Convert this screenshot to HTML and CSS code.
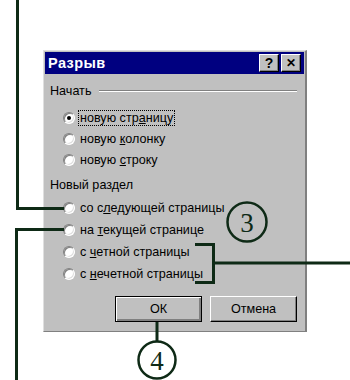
FILE: index.html
```html
<!DOCTYPE html>
<html lang="ru">
<head>
    <meta charset="UTF-8">
    <title>Разрыв</title>
    <link rel="stylesheet" href="styles.css">
</head>
<body>
    <div class="page">
        <div class="dialog">
            <div class="titlebar">
                <span class="title">Разрыв</span>
                <div class="title-buttons">
                    <div class="tbtn">?</div>
                    <div class="tbtn tbtn-close">&#x2715;</div>
                </div>
            </div>
            <div class="dialog-body">
                <div class="group-head">
                    <span>Начать</span>
                    <div class="group-line"></div>
                </div>
                <ul class="options">
                    <li><span class="radio checked"></span><span class="label focus">новую стр<u>а</u>ницу</span></li>
                    <li><span class="radio"></span><span class="label">новую <u>к</u>олонку</span></li>
                    <li><span class="radio"></span><span class="label">новую <u>с</u>троку</span></li>
                </ul>
                <div class="section-head">Новый раздел</div>
                <ul class="options options-wide">
                    <li><span class="radio"></span><span class="label">со с<u>л</u>едующей страницы</span></li>
                    <li><span class="radio"></span><span class="label">на <u>т</u>екущей странице</span></li>
                    <li><span class="radio"></span><span class="label">с <u>ч</u>етной страницы</span></li>
                    <li><span class="radio"></span><span class="label">с <u>н</u>ечетной страницы</span></li>
                </ul>
                <div class="buttons">
                    <div class="btn btn-default"><span>ОК</span></div>
                    <div class="btn"><span>Отмена</span></div>
                </div>
            </div>
        </div>

        <!-- callout lines drawn over the dialog -->
        <svg class="callouts" width="350" height="380" viewBox="0 0 350 380">
            <g fill="none" stroke="#0e2a16" stroke-width="3">
                <path d="M17.5 0 V208.5 H64"/>
                <path d="M16.5 380 V229.5 H64"/>
                <path d="M195 244.5 H213.5 V282.5 H195"/>
                <path d="M213.5 263 H350"/>
                <path d="M157 322 V342"/>
                <circle cx="247" cy="222" r="19.5" stroke-width="2.5"/>
                <circle cx="157" cy="360" r="18.5" stroke-width="2.5"/>
            </g>
            <g fill="#0e2a16" font-family="'Liberation Serif', serif" font-size="27" text-anchor="middle">
                <text x="247" y="231.5">3</text>
                <text x="157" y="369.5">4</text>
            </g>
        </svg>
    </div>
</body>
</html>
```

FILE: styles.css
```css
body {
    margin: 0;
    padding: 0;
    background-color: #ffffff;
    font-family: 'Liberation Sans', Arial, sans-serif;
    font-size: 12.6px;
    color: #000000;
}

.page {
    position: relative;
    width: 350px;
    height: 380px;
    overflow: hidden;
}

.dialog {
    margin: 50px 0 0 43px;
    width: 261px;
    background-color: #c0c0c0;
    border-top: 1px solid #dfdfdf;
    border-left: 1px solid #dfdfdf;
    border-right: 2px solid #808080;
    border-bottom: 1px solid #808080;
}

.titlebar {
    height: 22px;
    margin: 1px;
    background-color: #000080;
    display: flex;
    align-items: center;
    justify-content: space-between;
    padding: 0 3px 0 3px;
}

.title {
    color: #ffffff;
    font-weight: bold;
    font-size: 14.5px;
    letter-spacing: 0.4px;
}

.title-buttons {
    display: flex;
    gap: 2px;
}

.tbtn {
    width: 18px;
    height: 16px;
    background-color: #c0c0c0;
    border-top: 1px solid #ffffff;
    border-left: 1px solid #ffffff;
    border-right: 1px solid #000000;
    border-bottom: 1px solid #000000;
    box-shadow: inset -1px -1px 0 #808080;
    font-weight: bold;
    font-size: 14px;
    line-height: 16px;
    text-align: center;
}

.tbtn-close {
    font-size: 12px;
}

.dialog-body {
    padding: 7px 8px 9px 6px;
}

.group-head {
    display: flex;
    align-items: center;
    gap: 8px;
    height: 18px;
}

.group-line {
    flex: 1;
    height: 0;
    border-top: 1px solid #808080;
    border-bottom: 1px solid #ffffff;
}

.options {
    list-style: none;
    margin: 0;
    padding: 0 0 0 13px;
}

.options li {
    display: flex;
    align-items: center;
    height: 21px;
}

.options-wide li {
    height: 22px;
}

.group-head + .options {
    margin-top: 7px;
}

.radio {
    width: 12px;
    height: 12px;
    border-radius: 50%;
    background-color: #ffffff;
    box-shadow: inset 1px 1px 0 #808080, inset -1px -1px 0 #dfdfdf;
    border: 1px solid;
    border-color: #808080 #ffffff #ffffff #808080;
    box-sizing: border-box;
    margin-right: 3px;
    position: relative;
    flex: none;
}

.radio.checked::after {
    content: "";
    position: absolute;
    left: 3px;
    top: 3px;
    width: 4px;
    height: 4px;
    border-radius: 50%;
    background-color: #000000;
}

.label {
    padding: 0 1px;
    border: 1px solid transparent;
}

.label.focus {
    border: 1px dotted #000000;
}

.section-head {
    height: 22px;
    line-height: 22px;
    margin-top: 4px;
    margin-bottom: 1px;
}

.buttons {
    display: flex;
    justify-content: flex-end;
    gap: 8px;
    margin-top: 11px;
}

.btn {
    width: 87px;
    height: 26px;
    box-sizing: border-box;
    background-color: #c0c0c0;
    border-top: 1px solid #ffffff;
    border-left: 1px solid #ffffff;
    border-right: 1px solid #000000;
    border-bottom: 1px solid #000000;
    box-shadow: inset -1px -1px 0 #808080;
    display: flex;
    align-items: center;
    justify-content: center;
}

.btn-default {
    border: 1px solid #000000;
    box-shadow: inset 1px 1px 0 #ffffff, inset -2px -2px 0 #808080;
}

.callouts {
    position: absolute;
    left: 0;
    top: 0;
    pointer-events: none;
}
```
